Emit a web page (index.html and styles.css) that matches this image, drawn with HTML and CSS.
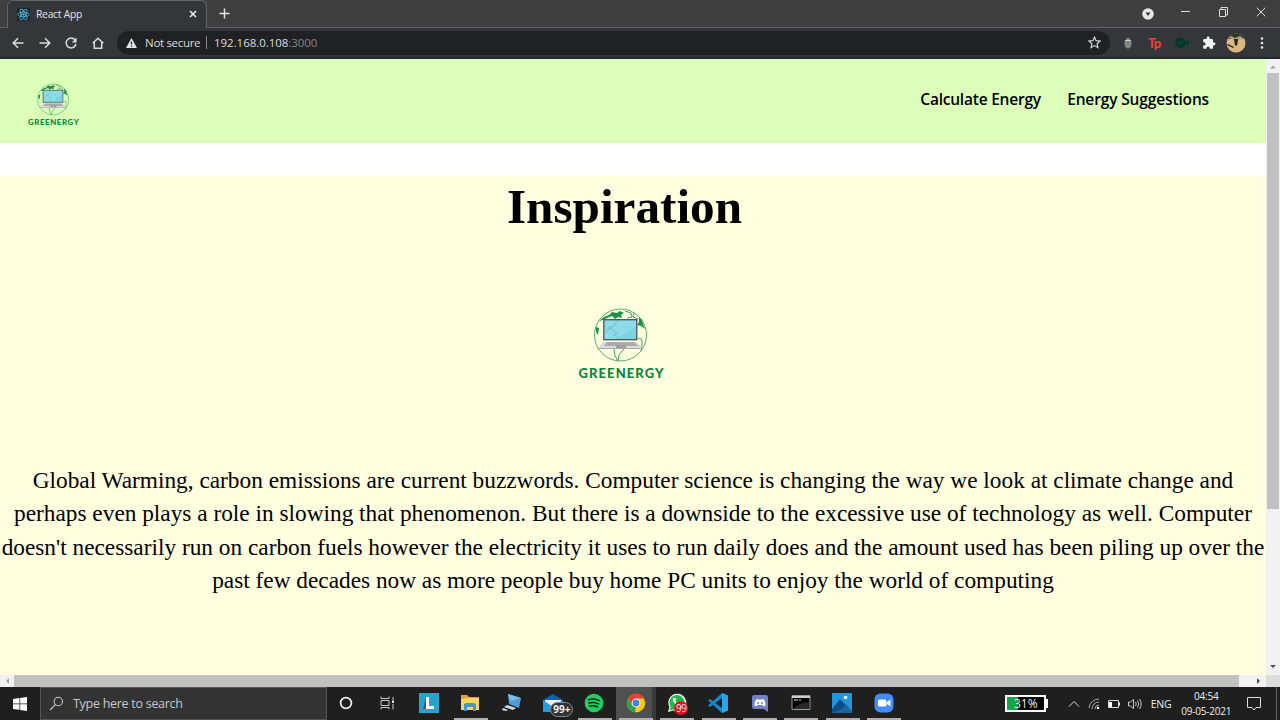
FILE: index.html
```html
<!DOCTYPE html>
<html lang="en">
<head>
<meta charset="utf-8">
<title>React App</title>
<link rel="stylesheet" href="styles.css">
</head>
<body>
<svg class="defs" width="0" height="0">
  <symbol id="logo" viewBox="0 0 88 74" overflow="visible">
    <circle cx="43.5" cy="29" r="26" fill="none" stroke="#2c9a50" stroke-width=".8"/>
    <path d="M22 15l5-4 5-2 3-3 5 1 3-2 4 2-3 2 1 3-4-1-3 2-3-3-5 2-4 2zM62 11l3 3 1 4 2 5-4-3-4-1 2-3zM19 21l3 1-1 7-2-3z" fill="#1f9147"/>
    <path d="M48 5l6 2 1 4-5 1M57 7l-1 4 5 2M61 33q4-3 4 4t-1 8M37 43l1 7 3 5 1-6 5-6" fill="none" stroke="#2c9a50" stroke-width=".9"/>
    <path d="M26 36h34l6 7H20z" fill="#dcdcdc"/>
    <path d="M30 36h27l4 4H27z" fill="#aaa"/>
    <path d="M20 42.500h46" stroke="#aaa" stroke-width="1"/>
    <path d="M39 39h10v3H39z" fill="#a0a0a0"/>
    <rect x="26.8" y="13.700" width="33" height="20" fill="#8ddbe8" stroke="#47535c" stroke-width="1.300"/>
    <path d="M28 27q5-7 8-3l4 3-3 2 5 4M40 15l-3 5-6 2" fill="none" stroke="#62b9bd" stroke-width=".8"/>
    <path d="M40 33L59 21v12z" fill="#7acddd" opacity=".7"/>
    <text x="1.500" y="71.800" textLength="85" class="logo-text">GREENERGY</text>
  </symbol>
</svg>

<div class="titlebar">
  <div class="tab">
    <svg width="13" height="13" viewBox="0 0 13 13"><rect width="13" height="13" rx="1" fill="#20232a"/><g fill="none" stroke="#4bb4d0" stroke-width=".9"><ellipse cx="6.5" cy="6.5" rx="5.8" ry="2.2"/><ellipse cx="6.5" cy="6.5" rx="5.8" ry="2.2" transform="rotate(60 6.5 6.5)"/><ellipse cx="6.5" cy="6.5" rx="5.8" ry="2.2" transform="rotate(120 6.5 6.5)"/></g><circle cx="6.5" cy="6.5" r="1.1" fill="#61dafb"/></svg>
    <span class="tab-title">React App</span>
    <svg class="tab-close" width="8" height="8" viewBox="0 0 8 8"><path d="M1 1l6 6M7 1L1 7" stroke="#eee" stroke-width="1.5"/></svg>
  </div>
  <svg class="new-tab" width="11" height="11" viewBox="0 0 11 11"><path d="M5.5.5v10M.5 5.500h10" stroke="#e4e4e4" stroke-width="1.5"/></svg>
  <div class="window-controls">
    <svg width="12" height="12" viewBox="0 0 12 12"><circle cx="6" cy="6" r="5.800" fill="#e6e6e6"/><path d="M3.500 4.500h5L6 8z" fill="#333"/></svg>
    <svg width="9" height="12" viewBox="0 0 9 12"><path d="M0 5.500h9" stroke="#ddd"/></svg>
    <svg width="9" height="10" viewBox="0 0 9 10"><path d="M.5 2.500h6v7h-6zM2 2.500v-2h6.500v7.500H6.500" fill="none" stroke="#ddd"/></svg>
    <svg width="10" height="10" viewBox="0 0 10 10"><path d="M.7.7l8.600 8.600M9.300.7L.7 9.300" stroke="#ddd"/></svg>
  </div>
</div>

<div class="toolbar">
  <div class="nav-buttons">
    <svg width="12" height="12" viewBox="0 0 12 12"><path d="M11.500 6H1.500M6 1.200L1.200 6 6 10.800" class="line"/></svg>
    <svg width="12" height="12" viewBox="0 0 12 12"><path d="M.5 6h10M6 1.200L10.800 6 6 10.800" class="line"/></svg>
    <svg width="12" height="12" viewBox="0 0 12 12"><path d="M10 3A4.900 4.900 0 1 0 10.900 7" class="line"/><path d="M11.600.5v5H6.800z" fill="#ddd"/></svg>
    <svg width="12" height="12" viewBox="0 0 12 12"><path d="M.7 6.300L6 1.200l5.300 5.100M2.300 5.500v5.700h7.400V5.500" class="line"/></svg>
  </div>
  <div class="address">
    <svg width="11" height="10" viewBox="0 0 11 10"><path d="M5.500 0L11 10H0z" fill="#e4e4e4"/><path d="M5.500 3.500v3M5.500 7.600v1.200" stroke="#222" stroke-width="1.200"/></svg>
    <span class="not-secure">Not secure</span>
    <span class="divider"></span>
    <span class="host">192.168.0.108</span><span class="port">:3000</span>
    <svg class="star" width="13" height="13" viewBox="0 0 13 13"><path d="M6.500 1.200l1.600 3.500 3.900.4-2.900 2.600.8 3.800-3.400-1.900-3.400 1.900.8-3.800L1 5.100l3.900-.4z" fill="none" stroke="#d5d5d5" stroke-width="1.200"/></svg>
  </div>
  <div class="extensions">
    <svg width="14" height="14" viewBox="0 0 14 14"><path d="M4.500 4Q7-1 9.500 4z" fill="#888"/><path d="M3.500 5h7v3Q10 12.500 7 12.500T3.500 8z" fill="#858585"/><path d="M4 4.500h6" stroke="#ccc"/></svg>
    <span class="tp">Tp</span>
    <svg width="14" height="14" viewBox="0 0 14 14"><path d="M5.500 1.500a5 5 0 0 1 4.700 4L14 4.500v5l-3.500-2A5 5 0 0 1 6 12l-1 1-.5-1.200A5.200 5.200 0 0 1 5.500 1.500z" fill="#06372e"/><path d="M2.500 7h6" stroke="#176b52" stroke-dasharray="1 .7"/></svg>
    <svg width="14" height="14" viewBox="0 0 24 24"><path d="M20.500 11H19V7a2 2 0 0 0-2-2h-4V3.500a2.500 2.500 0 0 0-5 0V5H4a2 2 0 0 0-2 2v3.800h1.500a2.700 2.700 0 0 1 0 5.400H2V20c0 1.100.9 2 2 2h3.800v-1.500a2.700 2.700 0 0 1 5.400 0V22H17a2 2 0 0 0 2-2v-4h1.500a2.500 2.500 0 0 0 0-5z" fill="#f1f1f1"/></svg>
    <svg width="20" height="20" viewBox="0 0 20 20"><defs><clipPath id="avatar"><circle cx="10" cy="10" r="9.500"/></clipPath></defs><g clip-path="url(#avatar)"><path d="M0 0h20v20H0z" fill="#dab782"/><path d="M0 0h20v4l-3 2H3L0 4z" fill="#34351e"/><path d="M2 5l3-2 4 2 5-2 4 3-8 1z" fill="#a3a58f"/><path d="M8 6h4l-1 7-2-1zM2 11l6 3-1 1-6-3z" fill="#2a2119"/></g></svg>
    <svg width="4" height="14" viewBox="0 0 4 14"><g fill="#e4e4e4"><circle cx="2" cy="2.500" r="1.300"/><circle cx="2" cy="7" r="1.300"/><circle cx="2" cy="11.500" r="1.300"/></g></svg>
  </div>
</div>

<div class="viewport">
  <main class="page">
    <header class="site-header">
      <svg class="brand" width="52.800" height="44.400"><use href="#logo"/></svg>
      <nav class="site-nav"><a class="calc">Calculate Energy</a><a class="suggest">Energy Suggestions</a></nav>
    </header>
    <section class="inspiration">
      <h1>Inspiration</h1>
      <svg class="hero-logo" width="88" height="74"><use href="#logo"/></svg>
      <p>
        <span>Global Warming, carbon emissions are current buzzwords. Computer science is changing the way we look at climate change and</span>
        <span>perhaps even plays a role in slowing that phenomenon. But there is a downside to the excessive use of technology as well. Computer</span>
        <span>doesn't necessarily run on carbon fuels however the electricity it uses to run daily does and the amount used has been piling up over the</span>
        <span>past few decades now as more people buy home PC units to enjoy the world of computing</span>
      </p>
    </section>
  </main>
  <div class="vscroll">
    <svg width="14" height="14" viewBox="0 0 14 14"><path d="M4 9.500L7 6.500l3 3z" fill="#a3a3a3"/></svg>
    <div class="vthumb"></div>
    <svg class="down" width="14" height="14" viewBox="0 0 14 14"><path d="M4 4l3 3 3-3z" fill="#505050"/></svg>
  </div>
</div>
<div class="hscroll">
  <svg width="14" height="12" viewBox="0 0 14 12"><path d="M9 3L6 6l3 3z" fill="#a3a3a3"/></svg>
  <div class="hthumb"></div>
  <svg class="right" width="27" height="12" viewBox="0 0 27 12"><path d="M18 3l3 3-3 3z" fill="#505050"/></svg>
  <div class="corner"></div>
</div>

<footer class="taskbar">
  <div class="start"><svg width="14" height="14" viewBox="0 0 14 14"><path d="M0 2l6.500-.9v5.500H0zM7.200 1L14 0v6.600H7.200zM0 7.300h6.500v5.500L0 12zM7.200 7.300H14V14l-6.800-1z" fill="#fff"/></svg></div>
  <div class="search">
    <svg width="15" height="15" viewBox="0 0 15 15"><circle cx="9.300" cy="5.500" r="4.200" fill="none" stroke="#ccc" stroke-width="1.100"/><path d="M6.300 8.700L1 14" stroke="#ccc" stroke-width="1.100"/></svg>
    <span class="search-text">Type here to search</span>
  </div>
  <div class="apps">
    <div class="app"><svg width="20" height="20" viewBox="0 0 20 20"><circle cx="10" cy="10" r="5.400" fill="none" stroke="#f2f2f2" stroke-width="1.700"/></svg></div>
    <div class="app"><svg width="20" height="20" viewBox="0 0 20 20"><path d="M3 3.500v2h8v-2M3 16.500v-2h8v2M3 7.500h8v5H3zM15 4v3M15 11v5.500" fill="none" stroke="#c8c8c8"/><path d="M14 7.500h2v2.500h-2z" fill="#eee"/></svg></div>
    <div class="app"><svg width="20" height="20" viewBox="0 0 20 20"><path d="M0 0h20v20H0z" fill="#29a3cb"/><path d="M7 4L4 16h5z" fill="#126a91"/><path d="M7 4h3v9h5v3H7z" fill="#fff"/></svg></div>
    <div class="app open"><svg width="20" height="20" viewBox="0 0 20 20"><path d="M1 2h6l2 2h10v4H1z" fill="#e2a61e"/><path d="M1 6l8-1h10v12H1z" fill="#fbd367"/><path d="M4 18v-7l2-1h8l2 1v7h-3v-4H7v4z" fill="#4896cf"/></svg></div>
    <div class="app"><svg width="20" height="20" viewBox="0 0 20 20"><path d="M6 1l13 4-2 10-10-4z" fill="#4e9ddb"/><path d="M6 1l13 4-11 3z" fill="#77c0ee"/><path d="M5 12l9 3-3 2-9-3zM1 15l5 2-2 1-4-1z" fill="#d8d8d8"/></svg></div>
    <div class="app"><svg width="20" height="20" viewBox="0 0 20 20"><path d="M0 7l10-6 10 6v12H0z" fill="#0a64b3"/><path d="M2 7h16v5l-8 4-8-4z" fill="#eee"/><path d="M0 7l10 7 10-7v12H0z" fill="#219be1"/></svg><span class="mail-badge">99+</span></div>
    <div class="app open"><svg width="20" height="20" viewBox="0 0 20 20"><circle cx="10" cy="10" r="9.300" fill="#20cf62"/><path d="M4.500 6.700q6-1.800 11 .9M5 10q5-1.400 9.500.9M5.500 13q4.500-1 8 .9" fill="none" stroke="#13281b" stroke-width="1.500" stroke-linecap="round"/></svg></div>
    <div class="app open active"><svg width="20" height="20" viewBox="0 0 20 20"><circle cx="10" cy="10" r="9.200" fill="#fbc915"/><path d="M2 5.400A9.200 9.200 0 0 1 18 5.400H10L6 12z" fill="#e34133"/><path d="M2 5.400L6 12l4 2-1 5.200A9.200 9.200 0 0 1 2 5.400z" fill="#2ca350"/><circle cx="10" cy="10" r="4.400" fill="#f3f3f3"/><circle cx="10" cy="10" r="3.400" fill="#4380eb"/></svg></div>
    <div class="app open"><svg width="20" height="20" viewBox="0 0 20 20"><path d="M1 19l1.400-5A9 9 0 1 1 6 17.600z" fill="#f4f4f4"/><path d="M2.700 17.300l1-3.500A7.500 7.500 0 1 1 7 16.500z" fill="#24b84b"/><path d="M6.500 5q-2 2 1.500 5.500t6 2.500l.5-2-2-1-1 1Q9 10 8.300 8l1-1-1-2z" fill="#fff"/></svg><span class="wa-badge">99</span></div>
    <div class="app open"><svg width="20" height="20" viewBox="0 0 20 20"><path d="M14 0l6 2.500v15L14 20 0 7.500 2 6l12 9V5L2 14 0 12.500z" fill="#1585c9"/><path d="M14 0l6 2.500v15L14 20z" fill="#29a5ed"/></svg></div>
    <div class="app open"><svg width="20" height="20" viewBox="0 0 20 20"><path d="M4 2h12q2 0 2 2v15l-4-3H4q-2 0-2-2V4q0-2 2-2z" fill="#6f80c6"/><path d="M6.500 6l2 .5h3l2-.5q2 2 2 6.500l-2 1-1-1.500h-5l-1 1.500-2-1Q4.500 8 6.500 6z" fill="#fff"/><circle cx="8" cy="10" r="1" fill="#6f80c6"/><circle cx="12" cy="10" r="1" fill="#6f80c6"/></svg></div>
    <div class="app open"><svg width="20" height="20" viewBox="0 0 20 20"><path d="M1 2.500h18v14H1z" fill="#000" stroke="#999"/><path d="M1 3h18v2H1z" fill="#ccc"/><path d="M3 7h4M8 7h2" stroke="#ddd"/><path d="M3 15q5-5 15-6v7H3z" fill="#292929"/></svg></div>
    <div class="app open"><svg width="20" height="20" viewBox="0 0 20 20"><path d="M0 0h20v20H0z" fill="#2196dc"/><path d="M0 16L8 6l12 13v1H0z" fill="#114b83"/><path d="M10 16l4-5 6 7v2H0z" fill="#1767a5"/><circle cx="13.500" cy="4.500" r="1.800" fill="#fff"/></svg></div>
    <div class="app open"><svg width="20" height="20" viewBox="0 0 20 20"><rect x=".5" y=".5" width="19" height="19" rx="6" fill="#438bfa"/><rect x="4" y="6.500" width="8.500" height="7" rx="1.500" fill="#fff"/><path d="M13 9l3.500-2.500v7L13 11z" fill="#fff"/></svg></div>
  </div>
  <div class="battery">31%</div>
  <div class="tray">
    <svg width="12" height="14" viewBox="0 0 12 14"><path d="M1 9.500l5-5 5 5" fill="none" stroke="#ddd"/></svg>
    <svg width="12" height="14" viewBox="0 0 12 14"><g fill="none" stroke="#aaa"><path d="M1 11A10 10 0 0 1 11 2M4 12A7 7 0 0 1 11 5M7 12A4 4 0 0 1 11 8"/></g><circle cx="10" cy="11" r="1.200" fill="#fff"/></svg>
    <svg width="13" height="14" viewBox="0 0 13 14"><path d="M1.500 3.500h10v7h-10z" fill="none" stroke="#ddd"/><path d="M2 5h3v5H2zM12 5.500h1v3h-1z" fill="#fff"/></svg>
    <svg width="14" height="14" viewBox="0 0 14 14"><path d="M.5 5h2L5.500 2.500v9L2.500 9h-2zM7.500 5q1.500 2 0 4M9.500 3.500q2.500 3.500 0 7M11.500 2q3.500 5 0 10" fill="none" stroke="#ccc"/></svg>
  </div>
  <span class="lang">ENG</span>
  <div class="clock"><span class="time">04:54</span><span class="date">09-05-2021</span></div>
  <svg class="notice" width="14" height="14" viewBox="0 0 14 14"><path d="M.5.500h13v10H9l-2 2.500L5 10.500H.5z" fill="none" stroke="#ddd"/></svg>
  <div class="show-desktop"></div>
</footer>
</body>
</html>
```
FILE: styles.css
```css
* { box-sizing: border-box; }
body { margin: 0; width: 1280px; height: 720px; overflow: hidden; display: flex; flex-direction: column; background: #fff; font-family: "Open Sans", "Noto Sans", sans-serif; }
svg { display: block; flex: none; }
span, a { white-space: nowrap; }
.defs { position: absolute; }
.brand, .hero-logo { overflow: visible; }
.logo-text { font: 900 13px Lato, sans-serif; fill: #0b8540; }
.line { fill: none; stroke: #ddd; stroke-width: 1.5; }

.titlebar { height: 28px; flex: none; display: flex; background: #3f3f3f; border-bottom: 1px solid #626366; }
.tab { width: 200px; height: 28px; margin-left: 7px; padding: 0 9px 1px 9px; display: flex; align-items: center; background: #35363a; border: 1px solid #626366; border-bottom: 0; border-radius: 6px 6px 0 0; }
.tab-title { margin-left: 6px; font-size: 10.300px; letter-spacing: -.25px; color: #e3e3e3; }
.tab-close { margin-left: auto; }
.new-tab { margin: 8px 0 0 12px; }
.window-controls { margin-left: auto; padding: 0 14px 3px 0; display: flex; align-items: center; gap: 28.500px; }
.window-controls svg:first-child { margin-top: 4px; margin-right: -1px; }

.toolbar { height: 31px; flex: none; display: flex; align-items: center; padding-left: 12px; background: #35363a; border-bottom: 2px solid #25272a; }
.nav-buttons { display: flex; gap: 14.700px; }
.address { width: 993px; height: 24px; margin-left: 13px; padding: 0 9px 0 9px; border-radius: 12px; background: #202124; display: flex; align-items: center; font-size: 11.500px; color: #ddd; }
.not-secure { margin-left: 8px; width: 56px; letter-spacing: -.32px; }
.divider { width: 1px; height: 13px; background: #888; margin: 0 7px 0 5px; }
.host, .port { letter-spacing: -.05px; }
.port { color: #858585; }
.star { margin-left: auto; }
.extensions { display: flex; align-items: center; margin-left: 11px; gap: 13px; }
.tp { width: 14px; font: 900 13px/14px Lato, sans-serif; letter-spacing: -.8px; color: #ef3d3d; }
.extensions svg:nth-child(5) { margin-left: -3px; }
.extensions svg:nth-child(6) { margin-left: 1px; }

.viewport { height: 616px; flex: none; display: flex; }
.page { width: 1266px; }
.site-header { height: 84px; display: flex; justify-content: space-between; background: #dbffb9; padding: 23px 57px 0 27px; }
.site-nav { display: flex; gap: 26.300px; padding-top: 6px; font-size: 15.500px; line-height: 22px; font-weight: 600; color: #000; }
.calc { letter-spacing: -.22px; }
.suggest { letter-spacing: -.14px; }
.inspiration { margin-top: 33px; height: 499px; background: #ffffdf; display: flex; flex-direction: column; align-items: center; color: #000; font-family: "Liberation Serif", serif; }
h1 { margin: 3px 17px 0 0; font-size: 49.200px; line-height: 56px; font-weight: bold; }
.hero-logo { margin: 71px 24px 0 0; }
p { margin: 84px 0 0; display: flex; flex-direction: column; align-items: center; font-size: 23.320px; line-height: 33.300px; }
.vscroll { width: 14px; display: flex; flex-direction: column; align-items: center; background: #f1f1f1; }
.vthumb { width: 12px; height: 436px; background: #c1c1c1; }
.down { margin-top: auto; }
.hscroll { height: 12px; flex: none; display: flex; background: #f1f1f1; }
.hthumb { width: 1225px; background: #c1c1c1; }
.corner { width: 14px; background: #dcdcdc; }

.taskbar { height: 33px; flex: none; display: flex; align-items: center; background: #1f1f1f; color: #eee; }
.start { width: 40px; display: flex; justify-content: center; }
.search { width: 287px; height: 33px; border: 1px solid #555; background: #333; padding-left: 8px; display: flex; align-items: center; }
.search-text { margin-left: 9px; font-size: 12.500px; letter-spacing: -.28px; color: #c8c8c8; }
.apps { display: flex; height: 33px; margin-left: -1.500px; }
.app { width: 41.350px; height: 33px; display: flex; align-items: center; justify-content: center; position: relative; padding-bottom: 1px; }
.open::after { content: ""; position: absolute; left: 4px; bottom: 0; width: 34px; height: 2px; background: #b5adad; }
.active { background: linear-gradient(90deg, transparent 0 1px, #505050 1px 37px, #3a3a3a 37px); }
.mail-badge { position: absolute; left: 18px; top: 15px; height: 15px; padding: 0 2px; border: 1px solid #888; border-radius: 8px; background: #333; font-size: 10px; line-height: 13px; font-weight: 700; }
.wa-badge { position: absolute; left: 18px; top: 14px; width: 14px; height: 14px; border-radius: 50%; background: #e2131b; font-size: 10px; line-height: 14px; text-align: center; letter-spacing: -.5px; }
.battery { margin-left: 101px; width: 41px; height: 17px; border: 2px solid #fff; background: linear-gradient(90deg, #16a34a 0 11px, #000 11px); font-size: 12px; line-height: 13px; text-align: center; position: relative; }
.battery::after { content: ""; position: absolute; right: -4px; top: 2px; width: 2px; height: 9px; background: #fff; }
.tray { display: flex; gap: 7.500px; margin-left: 22px; }
.lang { margin-left: 9px; font-size: 10.500px; letter-spacing: -.3px; }
.clock { width: 52px; margin-left: 9px; display: flex; flex-direction: column; align-items: center; font-size: 10px; line-height: 15px; letter-spacing: -.2px; }
.notice { margin-left: 15px; }
.show-desktop { width: 1px; height: 33px; margin-left: auto; margin-right: 3px; background: #666; }
```
